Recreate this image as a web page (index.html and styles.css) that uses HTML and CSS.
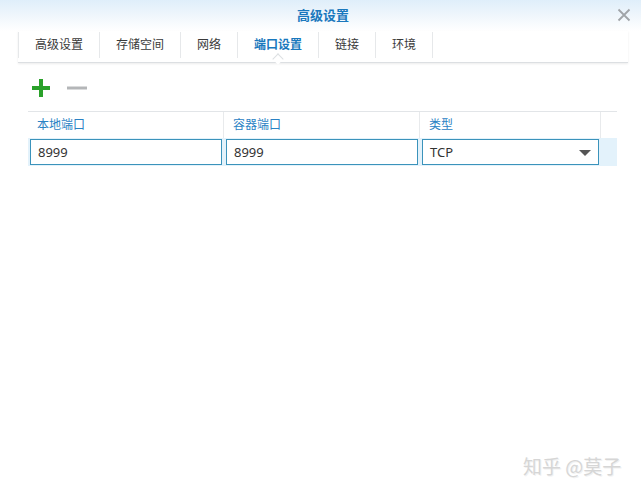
FILE: index.html
```html
<!DOCTYPE html>
<html lang="zh">
<head>
<meta charset="utf-8">
<title>高级设置</title>
<link rel="stylesheet" href="styles.css">
</head>
<body>
<div class="window">
  <div class="header">
    <div class="spacer"></div>
    <div class="title">高级设置</div>
    <div class="close">
      <svg width="14" height="14" viewBox="0 0 14 14"><path d="M1.5 1.5 L12.5 12.5 M12.5 1.5 L1.5 12.5" stroke="#a0a4a8" stroke-width="1.8" fill="none"/></svg>
    </div>
  </div>
  <div class="tabs">
    <div class="tab">高级设置</div>
    <div class="tab">存储空间</div>
    <div class="tab">网络</div>
    <div class="tab active">端口设置</div>
    <div class="tab">链接</div>
    <div class="tab">环境</div>
  </div>
  <div class="toolbar">
    <span class="btn add">
      <svg width="20" height="20" viewBox="0 0 20 20"><path d="M10 1 V19 M1 10 H19" stroke="#2aa12a" stroke-width="4" fill="none"/></svg>
    </span>
    <span class="btn remove">
      <svg width="20" height="20" viewBox="0 0 20 20"><path d="M0 10 H20" stroke="#b4b6b8" stroke-width="3" fill="none"/></svg>
    </span>
  </div>
  <div class="grid">
    <div class="row head">
      <div class="cell c1">本地端口</div>
      <div class="cell c2">容器端口</div>
      <div class="cell c3">类型</div>
      <div class="cell c4"></div>
    </div>
    <div class="row body">
      <div class="cell c1"><div class="field">8999</div></div>
      <div class="cell c2"><div class="field">8999</div></div>
      <div class="cell c3"><div class="field select"><span>TCP</span><span class="arrow"></span></div></div>
      <div class="cell c4"></div>
    </div>
  </div>
  <div class="watermark">知乎 @莫子</div>
</div>
</body>
</html>
```
FILE: styles.css
```css
html, body {
  margin: 0;
  padding: 0;
  background: #ffffff;
}
body {
  font-family: "Noto Sans", "Noto Sans CJK SC", sans-serif;
  font-size: 12px;
  color: #333;
}
.window {
  width: 641px;
  height: 495px;
  position: relative;
  overflow: hidden;
  background: #fff;
}
.header {
  height: 31px;
  display: grid;
  grid-template-columns: 40px 1fr 40px;
  align-items: center;
  background: linear-gradient(to bottom, #dfeefa 0%, #f1f7fc 55%, #ffffff 100%);
}
.title {
  text-align: center;
  font-size: 13px;
  font-weight: bold;
  color: #1a78bd;
  line-height: 31px;
  padding-left: 5px;
}
.close {
  display: flex;
  align-items: center;
  justify-content: flex-start;
  padding-left: 16px;
  padding-bottom: 1px;
}
.tabs {
  display: flex;
  margin: 0 13px 0 18px;
  height: 31px;
  border-bottom: 1px solid #dcdfe2;
  box-shadow: 0 1px 2px rgba(0,0,0,0.08);
  position: relative;
}
.tab {
  padding: 0 16px;
  line-height: 26px;
  margin-top: 1px;
  height: 26px;
  border-left: 1px solid #e6e8ea;
  color: #3a3a3a;
  font-size: 12px;
  position: relative;
}
.tab:last-child {
  border-right: 1px solid #e6e8ea;
}
.tab.active {
  color: #1a78bd;
  font-weight: bold;
}
.tab.active::after {
  content: "";
  position: absolute;
  left: 50%;
  bottom: -5px;
  width: 7px;
  height: 7px;
  margin-left: -4px;
  background: #fff;
  border-left: 1px solid #dcdfe2;
  border-top: 1px solid #dcdfe2;
  transform: rotate(45deg);
}
.toolbar {
  display: flex;
  align-items: center;
  gap: 16px;
  margin: 15px 0 0 31px;
  height: 20px;
}
.btn {
  display: flex;
  width: 20px;
  height: 20px;
}
.grid {
  margin: 13px 0 0 28px;
  width: 589px;
}
.row {
  display: grid;
  grid-template-columns: 196px 196px 181px 16px;
}
.row.head {
  border-top: 1px solid #e2e5e8;
  height: 26px;
}
.row.head .cell {
  color: #2a82c4;
  font-size: 12px;
  line-height: 26px;
  padding-left: 9px;
  border-right: 1px solid #e8eaec;
}
.row.head .cell.c4 {
  border-right: none;
}
.row.body {
  height: 28px;
  background: #e3f2fb;
}
.row.body .cell {
  padding: 1px 2px 1px 2px;
}
.row.body .cell.c4 {
  padding: 0;
}
.field {
  height: 24px;
  border: 1px solid #3b93bb;
  background: #fff;
  line-height: 24px;
  padding-left: 7px;
  font-size: 13px;
  color: #333;
  box-sizing: content-box;
}
.select {
  display: flex;
  justify-content: space-between;
  align-items: center;
  padding-right: 7px;
}
.arrow {
  width: 0;
  height: 0;
  border-left: 6px solid transparent;
  border-right: 6px solid transparent;
  border-top: 6px solid #555;
  margin-top: 1px;
}
.watermark {
  position: absolute;
  left: 523px;
  top: 452px;
  font-size: 19px;
  color: #d6d6d6;
  text-shadow: 1px 1px 0 #f2f2f2, -1px -1px 0 #ffffff;
  font-family: "Noto Sans CJK SC", sans-serif;
}
```
